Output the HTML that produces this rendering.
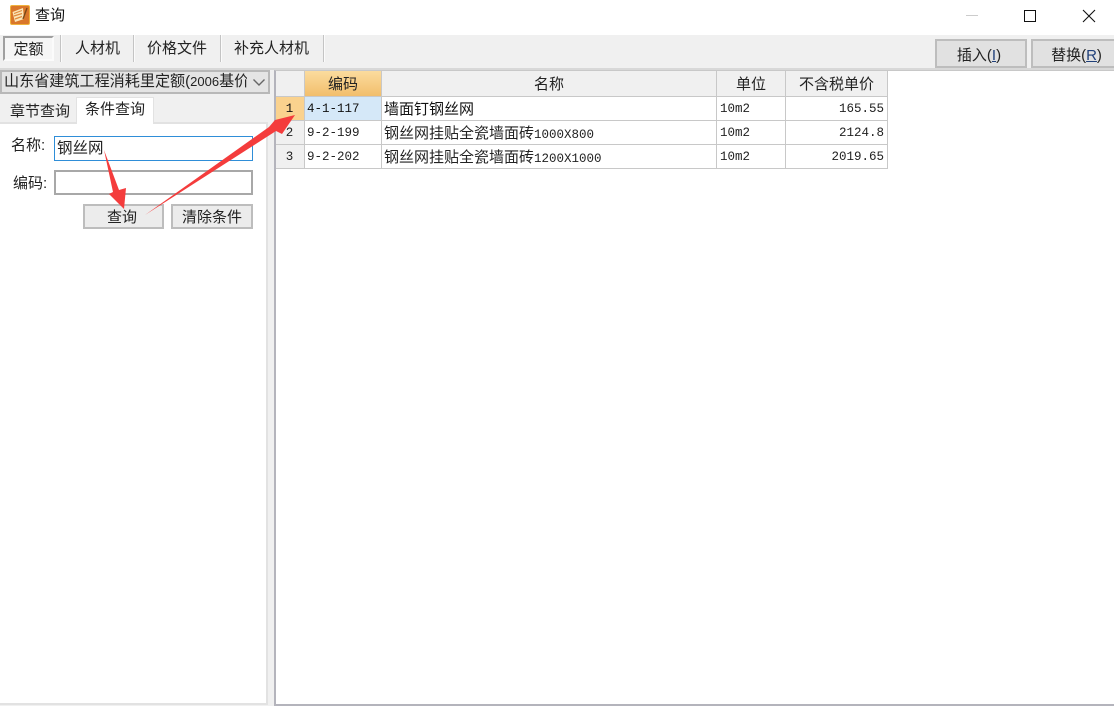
<!DOCTYPE html>
<html><head><meta charset="utf-8">
<style>
html,body{margin:0;padding:0;width:1114px;height:706px;overflow:hidden;background:#f0f0f0}
body{position:relative;font-family:"Liberation Sans","Noto Sans CJK SC",sans-serif;font-size:15px;color:#222}
.a{position:absolute;box-sizing:border-box;white-space:nowrap}
.t{line-height:20px}
.m{font-family:"Liberation Mono","Noto Sans CJK SC",monospace;font-size:12.5px}
.hd{background:#f0f0f0;text-align:center;line-height:27px;height:26px;top:71px;border-right:1px solid #c8c8c8;border-bottom:1px solid #c8c8c8}
.c{line-height:25px;height:24px;background:#fff;border-right:1px solid #c8c8c8;border-bottom:1px solid #c8c8c8;padding-left:2px;overflow:hidden}
.btn{background:#e1e1e1;border:2px solid #bdbdbd;text-align:center}
.sep{background:#c4c4c4;top:35px;height:27px;border-right:1px solid #fbfbfb;box-sizing:content-box;width:1px}
</style></head><body>
<div class="a" style="left:0;top:0;width:1114px;height:35px;background:#fff"></div>
<svg class="a" style="left:10px;top:5px" width="20" height="20" viewBox="0 0 20 20">
<rect x="0.5" y="0.5" width="19" height="19" rx="1.5" fill="#d9762a" stroke="#f0b23c"/>
<path d="M2.5 7 L13 3 L14 14 L5 17 Z" fill="#fbe6b8"/>
<path d="M4 8.5 L12 5.5 M4 11 L12 8.5 M5 14 L12 11.5" stroke="#e08a3c" stroke-width="1.2"/>
<path d="M13 14 L17 3" stroke="#7a4a18" stroke-width="1.4"/>
</svg>
<div class="a t" style="left:35px;top:6px;color:#111">查询</div>
<div class="a" style="left:966px;top:15px;width:12px;height:1px;background:#ccc"></div>
<div class="a" style="left:1024px;top:10px;width:12px;height:12px;border:1px solid #111"></div>
<svg class="a" style="left:1082px;top:9px" width="14" height="14" viewBox="0 0 14 14"><path d="M1 1 L13 13 M13 1 L1 13" stroke="#111" stroke-width="1.1" fill="none"/></svg>

<div class="a" style="left:0;top:68px;width:1114px;height:2px;background:#d8d8d8"></div>
<div class="a t" style="left:3px;top:36px;width:51px;height:25px;background:#f6f6f6;border:2px solid;border-color:#a0a0a0 #fbfbfb #fbfbfb #a0a0a0;text-align:center;line-height:24px">定额</div>
<div class="a sep" style="left:60px"></div>
<div class="a sep" style="left:133px"></div>
<div class="a sep" style="left:220px"></div>
<div class="a sep" style="left:323px"></div>
<div class="a t" style="left:75px;top:39px">人材机</div>
<div class="a t" style="left:147px;top:39px">价格文件</div>
<div class="a t" style="left:234px;top:39px">补充人材机</div>
<div class="a btn" style="left:935px;top:39px;width:92px;height:29px;line-height:29px;padding-right:4px">插入(<span style="color:#20407a;text-decoration:underline">I</span>)</div>
<div class="a btn" style="left:1031px;top:39px;width:83px;height:29px;line-height:29px;border-right:0;padding-left:6px">替换(<span style="color:#20407a;text-decoration:underline">R</span>)</div>

<div class="a" style="left:0;top:70px;width:270px;height:24px;background:#e4e4e4;border:2px solid #b8b8b8"></div>
<div class="a" style="left:4px;top:72px;width:243px;height:20px;overflow:hidden;line-height:20px;font-size:15.1px">山东省建筑工程消耗里定额(<span style="font-size:13px">2006</span>基价)</div>
<svg class="a" style="left:252px;top:78px" width="14" height="9" viewBox="0 0 14 9"><path d="M1.5 1.5 L7 7 L12.5 1.5" stroke="#666" stroke-width="1.4" fill="none"/></svg>

<div class="a" style="left:0;top:122px;width:268px;height:583px;background:#fff;border:2px solid #e2e2e2;border-left:0"></div>
<div class="a t" style="left:10px;top:102px">章节查询</div>
<div class="a t" style="left:76px;top:97px;width:78px;height:27px;background:#fff;border:1px solid #e2e2e2;border-bottom:0;text-align:center;line-height:24px">条件查询</div>

<div class="a t" style="left:11px;top:136px">名称:</div>
<div class="a" style="left:54px;top:136px;width:199px;height:25px;background:#fff;border:1px solid #2f8ed8"></div>
<div class="a t" style="left:57px;top:139px;font-size:15.5px">钢丝网</div>
<div class="a t" style="left:13px;top:174px">编码:</div>
<div class="a" style="left:54px;top:170px;width:199px;height:25px;background:#fff;border:2px solid #a8a8a8"></div>
<div class="a btn" style="left:83px;top:204px;width:81px;height:25px;line-height:24px;background:#ececec;padding-right:3px">查询</div>
<div class="a btn" style="left:171px;top:204px;width:82px;height:25px;line-height:24px;background:#ececec">清除条件</div>

<div class="a" style="left:274px;top:70px;width:840px;height:636px;background:#fff;border-left:2px solid #b4b4bc;border-top:1px solid #c8c8c8;border-bottom:2px solid #b4b4bc"></div>
<div class="a hd" style="left:276px;width:29px"></div>
<div class="a hd" style="left:305px;width:77px;background:linear-gradient(#fbdc9e,#f2be6c);color:#222">编码</div>
<div class="a hd" style="left:382px;width:335px">名称</div>
<div class="a hd" style="left:717px;width:69px">单位</div>
<div class="a hd" style="left:786px;width:102px">不含税单价</div>

<div class="a c m" style="left:276px;top:97px;width:29px;background:#fad28e;text-align:center;padding:0 1px 0 0;color:#111">1</div>
<div class="a c m" style="left:305px;top:97px;width:77px;background:#d5e8f8;color:#111">4-1-117</div>
<div class="a c" style="left:382px;top:97px;width:335px;color:#111">墙面钉钢丝网</div>
<div class="a c m" style="left:717px;top:97px;width:69px;padding-left:3px">10m2</div>
<div class="a c m" style="left:786px;top:97px;width:102px;text-align:right;padding-right:3px">165.55</div>

<div class="a c m" style="left:276px;top:121px;width:29px;background:#f0f0f0;text-align:center;padding:0 1px 0 0">2</div>
<div class="a c m" style="left:305px;top:121px;width:77px">9-2-199</div>
<div class="a c" style="left:382px;top:121px;width:335px">钢丝网挂贴全瓷墙面砖<span class="m">1000X800</span></div>
<div class="a c m" style="left:717px;top:121px;width:69px;padding-left:3px">10m2</div>
<div class="a c m" style="left:786px;top:121px;width:102px;text-align:right;padding-right:3px">2124.8</div>

<div class="a c m" style="left:276px;top:145px;width:29px;background:#f0f0f0;text-align:center;padding:0 1px 0 0">3</div>
<div class="a c m" style="left:305px;top:145px;width:77px">9-2-202</div>
<div class="a c" style="left:382px;top:145px;width:335px">钢丝网挂贴全瓷墙面砖<span class="m">1200X1000</span></div>
<div class="a c m" style="left:717px;top:145px;width:69px;padding-left:3px">10m2</div>
<div class="a c m" style="left:786px;top:145px;width:102px;text-align:right;padding-right:3px">2019.65</div>

<svg class="a" style="left:0;top:0" width="1114" height="706" viewBox="0 0 1114 706">
<path d="M104 150 L119 190 L126 188 L124 209 L109 194 L113 192 Z" fill="#f43c3c"/>
<path d="M145 215 L269 127 L275 120 L295 115 L282 134 L276 131 Z" fill="#f43c3c"/>
</svg>
</body></html>
